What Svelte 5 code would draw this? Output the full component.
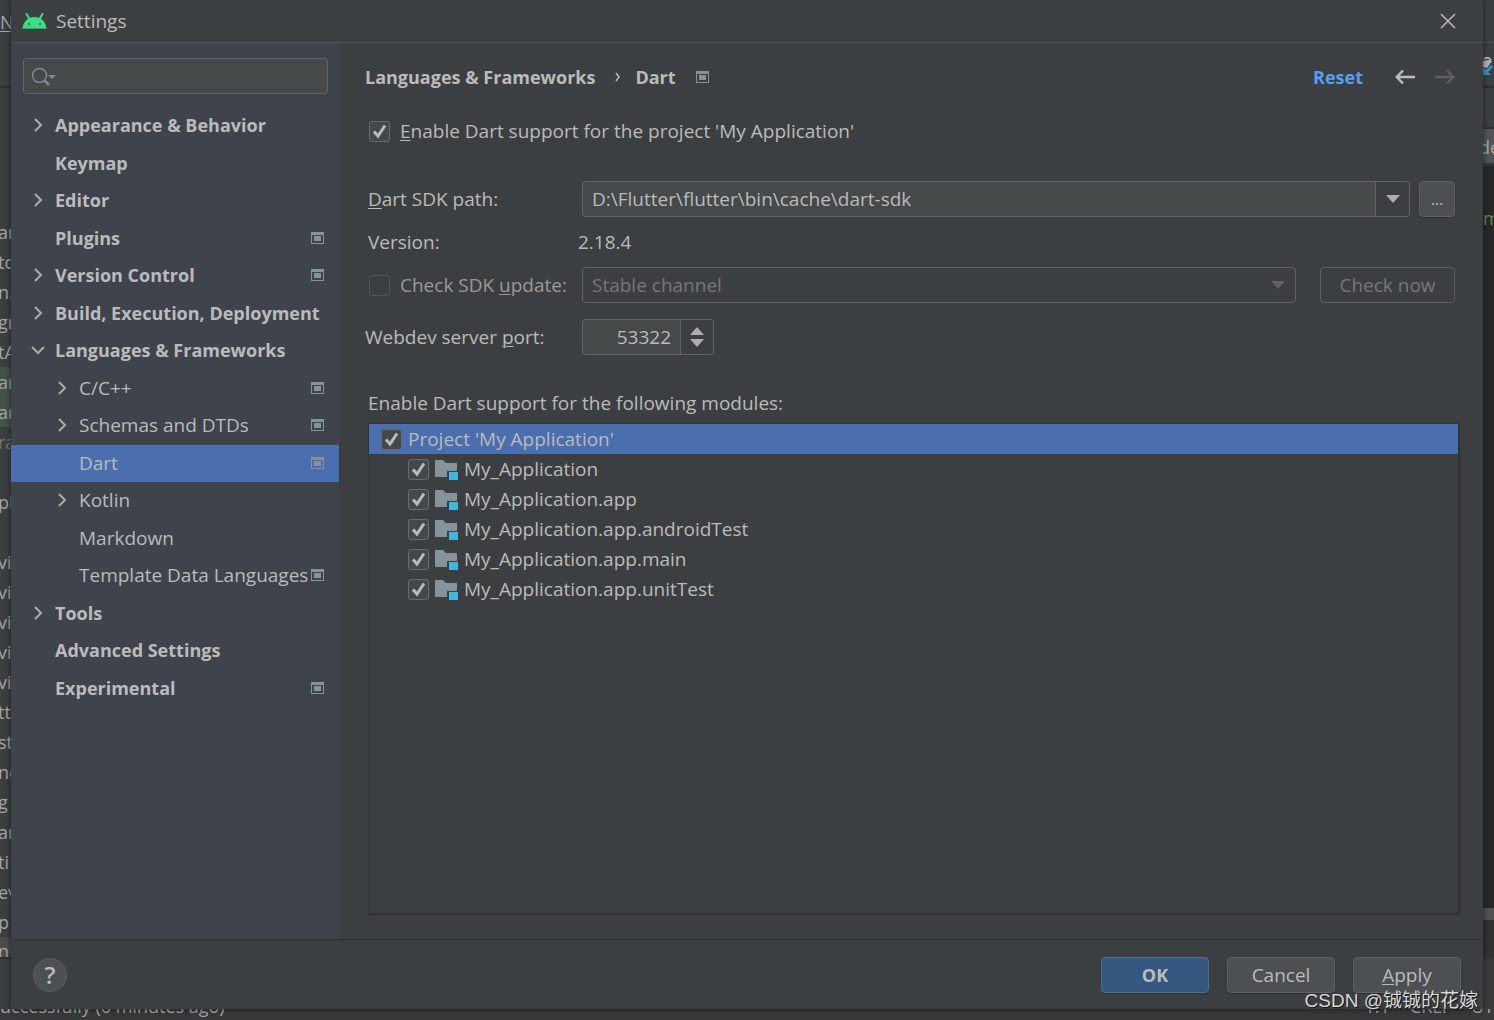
<script>
  const tree = [
    { label: 'Appearance & Behavior', level: 0, arrow: 'right' },
    { label: 'Keymap', level: 0 },
    { label: 'Editor', level: 0, arrow: 'right' },
    { label: 'Plugins', level: 0, project: true },
    { label: 'Version Control', level: 0, arrow: 'right', project: true },
    { label: 'Build, Execution, Deployment', level: 0, arrow: 'right' },
    { label: 'Languages & Frameworks', level: 0, arrow: 'down' },
    { label: 'C/C++', level: 1, arrow: 'right', project: true },
    { label: 'Schemas and DTDs', level: 1, arrow: 'right', project: true },
    { label: 'Dart', level: 1, project: true },
    { label: 'Kotlin', level: 1, arrow: 'right' },
    { label: 'Markdown', level: 1 },
    { label: 'Template Data Languages', level: 1, project: true },
    { label: 'Tools', level: 0, arrow: 'right' },
    { label: 'Advanced Settings', level: 0 },
    { label: 'Experimental', level: 0, project: true }
  ];
  let selected = $state('Dart');

  let enabled = $state(true);
  let sdkPath = $state('D:\\Flutter\\flutter\\bin\\cache\\dart-sdk');
  let port = $state('53322');
  let modules = $state([
    { name: "Project 'My Application'", root: true, checked: true },
    { name: 'My_Application', checked: true },
    { name: 'My_Application.app', checked: true },
    { name: 'My_Application.app.androidTest', checked: true },
    { name: 'My_Application.app.main', checked: true },
    { name: 'My_Application.app.unitTest', checked: true }
  ]);

  const behind = [
    'ar', 'to', 'n.', 'gr', 'tA', 'ar', 'ar', 'ra', '', 'ple', '', 'vi', 'vi',
    'vi', 'vi', 'vi', 'tt', 'st', 'ne', 'g', 'ar', 'ti', 'ev', 'p', 'n'
  ];

  function step(by) {
    port = String(Number(port) + by);
  }
</script>

{#snippet projectIcon()}
  <svg class="project" width="13" height="12" viewBox="0 0 13 12" aria-hidden="true">
    <path fill="#87939a" fill-rule="evenodd" d="M0 0h13v12H0zM1 3v8h11V3z" />
    <path fill="#87939a" d="M3 4h7v5H3z" />
  </svg>
{/snippet}

{#snippet tick()}
  <svg class="tick" width="21" height="21" viewBox="0 0 21 21" aria-hidden="true">
    <path fill="none" stroke="#bbb" stroke-width="3" d="M5 10.5l4 4.500 7-10.500" />
  </svg>
{/snippet}

<div class="screen">
  <div class="ide" aria-hidden="true">
    <div class="left">
      <div class="menu"><u>N</u></div>
      <div class="files">
        {#each behind as text, i}
          <div class="file" class:added={i === 5 || i === 6} class:dim={i === 7} class:scroll={i === 24}>{text}</div>
        {/each}
      </div>
    </div>
    <div class="right">
      <div class="r-title"></div>
      <div class="r-tools">
        <svg width="11" height="24" viewBox="0 0 11 24">
          <path fill="none" stroke="#afb1b3" stroke-width="2" d="M1 4c4-3 8 0 6 3" />
          <path fill="#afb1b3" d="M0 6l5-1 4 1-5 7-4-1z" />
          <path fill="#3592c4" d="M0 12l3 3 5-5 2 2-5 5 3 3H0z" />
        </svg>
      </div>
      <div class="r-gap"></div>
      <div class="r-tab">de</div>
      <div class="r-code"><span>m</span></div>
      <div class="r-scroll"></div>
      <div class="r-panel"></div>
      <div class="r-rest"></div>
    </div>
    <div class="status">
      <span class="message">uccessfully (6 minutes ago)</span>
      <span>1:1</span><span>CRLF</span><span>UT</span>
    </div>
  </div>

  <main class="dialog">
    <header class="title">
      <svg width="25" height="16" viewBox="0 0 25 16" aria-hidden="true">
        <path stroke="#3ddc84" stroke-width="2" stroke-linecap="round" d="M4.500 1l3 5M20.500 1l-3 5" />
        <path fill="#3ddc84" d="M.5 16C1 8.500 6 4 12.500 4s11.500 4.500 12 12z" />
        <path fill="#35a96b" d="M.5 15h24v1H.5z" />
        <circle cx="7" cy="11" r="1" fill="#25603f" /><circle cx="18" cy="11" r="1" fill="#25603f" />
      </svg>
      <h1>Settings</h1>
      <button class="icon close" aria-label="Close">
        <svg width="16" height="16" viewBox="0 0 16 16"><path stroke="#bbb" stroke-width="1.500" d="M1 1l14 14M15 1L1 15" /></svg>
      </button>
    </header>

    <div class="body">
      <nav class="sidebar" aria-label="Settings sections">
        <label class="search">
          <svg width="26" height="20" viewBox="0 0 26 20" aria-hidden="true">
            <circle cx="8.500" cy="9.500" r="7" fill="none" stroke="#7f8b91" stroke-width="1.500" />
            <path stroke="#7f8b91" stroke-width="2.500" d="M13 14l5 5" />
            <path fill="#7f8b91" d="M17 9h8l-4 4z" />
          </svg>
          <input type="text" aria-label="Search settings" />
        </label>
        <ul class="tree">
          {#each tree as item}
            <li>
              <button
                class="node"
                class:child={item.level === 1}
                class:selected={item.label === selected}
                onclick={() => (selected = item.label)}
              >
                <svg class="chevron" width="14" height="14" viewBox="0 0 14 14" aria-hidden="true">
                  {#if item.arrow}
                    <path
                      fill="none"
                      stroke="#adadad"
                      stroke-width="2"
                      d={item.arrow === 'right' ? 'M4 1l6 6-6 6' : 'M1 4l6 6 6-6'}
                    />
                  {/if}
                </svg>
                <span>{item.label}</span>
                {#if item.project}{@render projectIcon()}{/if}
              </button>
            </li>
          {/each}
        </ul>
      </nav>

      <section class="page">
        <div class="crumbs">
          <a href="#languages">Languages &amp; Frameworks</a>
          <svg width="6" height="12" viewBox="0 0 6 12" aria-hidden="true"><path fill="none" stroke="#bbb" stroke-width="1.500" d="M1 2l3 4-3 4" /></svg>
          <h2>Dart</h2>
          {@render projectIcon()}
          <a class="reset" href="#reset">Reset</a>
          <button class="icon" aria-label="Back">
            <svg width="20" height="16" viewBox="0 0 20 16"><path fill="none" stroke="#bbb" stroke-width="2.500" d="M20 8H2M8 1.500L1.800 8 8 14.500" /></svg>
          </button>
          <button class="icon" aria-label="Forward" disabled>
            <svg width="20" height="16" viewBox="0 0 20 16"><path fill="none" stroke="#5c5e60" stroke-width="2.500" d="M0 8h18M12 1.500L18.200 8 12 14.500" /></svg>
          </button>
        </div>

        <label class="check enable">
          <span class="box"><input type="checkbox" bind:checked={enabled} />{#if enabled}{@render tick()}{/if}</span>
          <span><u>E</u>nable Dart support for the project 'My Application'</span>
        </label>

        <div class="row">
          <label class="name" for="sdk"><u>D</u>art SDK path:</label>
          <div class="field grow">
            <input id="sdk" type="text" bind:value={sdkPath} />
            <button class="drop" aria-label="Show paths">
              <svg width="14" height="8" viewBox="0 0 14 8"><path fill="#adadad" d="M0 0h14L7 8z" /></svg>
            </button>
          </div>
          <button class="button browse" aria-label="Browse">...</button>
        </div>

        <div class="row version">
          <span class="name">Version:</span>
          <span>2.18.4</span>
        </div>

        <div class="row">
          <label class="name check off">
            <span class="box"><input type="checkbox" disabled /></span>
            <span>Check SDK <u>u</u>pdate:</span>
          </label>
          <div class="field grow disabled">
            <select disabled aria-label="Update channel"><option>Stable channel</option></select>
            <svg class="caret" width="14" height="8" viewBox="0 0 14 8" aria-hidden="true"><path fill="#5f6163" d="M0 0h14L7 8z" /></svg>
          </div>
          <button class="button now" disabled>Check now</button>
        </div>

        <div class="row port">
          <label class="name" for="port">Webdev server <u>p</u>ort:</label>
          <div class="field">
            <input id="port" type="text" inputmode="numeric" bind:value={port} />
            <span class="spin">
              <button aria-label="Increase" onclick={() => step(1)}>
                <svg width="14" height="8" viewBox="0 0 14 8"><path fill="#adadad" d="M0 8h14L7 0z" /></svg>
              </button>
              <button aria-label="Decrease" onclick={() => step(-1)}>
                <svg width="14" height="8" viewBox="0 0 14 8"><path fill="#adadad" d="M0 0h14L7 8z" /></svg>
              </button>
            </span>
          </div>
        </div>

        <h3>Enable Dart support for the following modules:</h3>
        <ul class="modules">
          {#each modules as mod}
            <li class:root={mod.root}>
              <label class="check">
                <span class="box"><input type="checkbox" bind:checked={mod.checked} />{#if mod.checked}{@render tick()}{/if}</span>
                {#if !mod.root}
                  <svg width="23" height="22" viewBox="0 0 23 22" aria-hidden="true">
                    <path fill="#87939a" d="M0 2h8l3 3h11v8H12v6H0z" />
                    <path fill="#40b6e0" d="M14 14h9v8h-9z" />
                  </svg>
                {/if}
                <span>{mod.name}</span>
              </label>
            </li>
          {/each}
        </ul>
      </section>
    </div>

    <footer>
      <button class="help" aria-label="Help">?</button>
      <button class="button primary">OK</button>
      <button class="button">Cancel</button>
      <button class="button"><span><u>A</u>pply</span></button>
    </footer>
  </main>

  <div class="watermark">CSDN @铖铖的花嫁</div>
</div>

<style>
  :global(body) {
    background: #3c3f41;
  }
  .screen {
    position: relative;
    height: 100vh;
    min-height: 1020px;
    box-sizing: border-box;
    padding: 0 11px 11px;
    overflow: hidden;
    font: 19px/24px 'Open Sans', 'Noto Sans', 'Noto Sans CJK SC', sans-serif;
    color: #bbb;
  }
  .screen :is(button, input, select) {
    font: inherit;
    color: inherit;
    margin: 0;
    padding: 0;
    border: 0;
    background: none;
    box-sizing: border-box;
    outline: none;
  }
  svg {
    display: block;
    flex: none;
  }
  u {
    text-decoration-thickness: 1px;
    text-underline-offset: 2px;
  }
  h1, h2, h3, ul {
    margin: 0;
    padding: 0;
    font-size: inherit;
    font-weight: 400;
    list-style: none;
  }

  /* editor window behind the dialog */
  .ide {
    position: absolute;
    inset: 0;
    display: grid;
    grid-template: 1fr 11px / 11px 1fr 11px;
    font-size: 18px;
    color: #a4a6a8;
  }
  .left, .right {
    overflow: hidden;
    white-space: nowrap;
    display: flex;
    flex-direction: column;
  }
  .right {
    grid-column: 3;
  }
  .menu {
    height: 76px;
    padding-top: 10px;
    border-bottom: 2px solid #2f3132;
  }
  .files {
    padding-top: 129px;
  }
  .file {
    height: 30px;
    line-height: 30px;
    text-indent: -2px;
  }
  .added {
    background: #455246;
  }
  .dim {
    color: #777;
  }
  .scroll {
    height: 20px;
    line-height: 28px;
    background: #4a4d4f;
    border-bottom: 2px solid #2f3132;
    overflow: hidden;
  }
  .r-title {
    height: 42px;
    border-bottom: 1px solid #4b4e50;
  }
  .r-tools {
    height: 43px;
    padding-top: 12px;
    box-sizing: border-box;
  }
  .r-gap {
    height: 39px;
    border-block: 2px solid #2f3132;
    box-sizing: content-box;
  }
  .r-tab {
    height: 34px;
    line-height: 36px;
    text-indent: -4px;
    background: #515558;
    border-bottom: 3px solid #35373a;
  }
  .r-code {
    flex: 1;
    padding-top: 40px;
    background: #282828;
    color: #6a8759;
  }
  .r-scroll {
    height: 12px;
    background: #505254;
  }
  .r-panel {
    height: 39px;
    background: #303234;
  }
  .r-rest {
    height: 50px;
    background: #3a3c3e;
  }
  .status {
    grid-column: 1 / -1;
    display: flex;
    gap: 20px;
    align-items: flex-end;
    height: 11px;
    padding-bottom: 2px;
    box-sizing: border-box;
    overflow: hidden;
    background: #37393b;
    white-space: nowrap;
  }
  .message {
    flex: 1;
  }

  /* dialog frame */
  .dialog {
    position: relative;
    display: flex;
    flex-direction: column;
    height: 100%;
    background: #3c3f41;
    box-shadow: 0 0 6px #0009;
  }
  .title {
    display: flex;
    align-items: center;
    gap: 9px;
    height: 42px;
    padding: 0 27px 0 11px;
    border-bottom: 1px solid #515456;
  }
  .screen .close {
    margin-left: auto;
  }
  .icon {
    display: block;
  }
  .body {
    flex: 1;
    display: flex;
    min-height: 0;
  }
  .sidebar {
    width: 328px;
    flex: none;
    box-sizing: border-box;
    padding-top: 15px;
    background: #3e434c;
  }
  .search {
    display: flex;
    align-items: center;
    height: 36px;
    margin: 0 11px 13px 12px;
    padding: 0 7px;
    gap: 4px;
    box-sizing: border-box;
    border: 1px solid #646464;
    border-radius: 4px;
    background: #45494a;
  }
  .search input {
    flex: 1;
    min-width: 0;
  }
  .tree {
    display: grid;
    grid-auto-rows: 1fr;
    height: 600px;
  }
  .node {
    display: flex;
    align-items: center;
    gap: 10px;
    width: 100%;
    height: 100%;
    white-space: nowrap;
  }
  .screen .node {
    padding: 0 15px 1px 20px;
    font-size: 18px;
    font-weight: 700;
  }
  .screen .node.child {
    padding-left: 44px;
    font-size: 19px;
    font-weight: 400;
  }
  .screen .node.selected {
    background: #4b6eaf;
  }
  .node .project {
    margin-left: auto;
  }
  .node.child .project {
    margin-left: auto;
  }
  .node.child {
    gap: 10px;
  }
  .node.child > span {
    margin-right: -8px;
  }

  /* Dart page */
  .page {
    flex: 1;
    min-width: 0;
    display: flex;
    flex-direction: column;
    padding: 22px 23px 24px 29px;
  }
  .crumbs {
    display: flex;
    align-items: center;
    gap: 20px;
    height: 24px;
    margin: 0 5px 0 -3px;
    font-size: 18px;
  }
  .crumbs a, .crumbs h2 {
    color: inherit;
    font-weight: 700;
    text-decoration: none;
  }
  .crumbs svg + h2 {
    margin-left: -6px;
  }
  .crumbs .reset {
    margin: 0 12px 0 auto;
    color: #589df6;
  }
  .check {
    display: flex;
    align-items: center;
    gap: 10px;
  }
  .box {
    display: grid;
    width: 21px;
    height: 21px;
    flex: none;
  }
  .box > :global(*) {
    grid-area: 1 / 1;
  }
  .screen .box input {
    appearance: none;
    width: 21px;
    height: 21px;
    border: 1px solid #6b6b6b;
    border-radius: 3px;
    background: #43494a;
  }
  .screen .box input:disabled {
    border-color: #545556;
    background: none;
  }
  .tick {
    pointer-events: none;
  }
  .enable {
    margin: 30px 0 38px 1px;
  }
  .row {
    display: flex;
    align-items: center;
    height: 36px;
    margin-right: 5px;
  }
  .name {
    width: 214px;
    flex: none;
    white-space: nowrap;
  }
  .version {
    height: 50px;
  }
  .version .name {
    width: 210px;
  }
  .off {
    box-sizing: border-box;
    padding-left: 1px;
    color: #999;
  }
  .port {
    margin: 16px 0 36px -3px;
  }
  .port .name {
    width: 217px;
  }
  .field {
    display: flex;
    height: 36px;
    box-sizing: border-box;
    border: 1px solid #646464;
    border-radius: 4px;
    background: #45494a;
    overflow: hidden;
  }
  .grow {
    flex: 1;
  }
  .screen .field input {
    flex: 1;
    min-width: 0;
    padding: 0 9px;
  }
  .drop, .spin {
    width: 34px;
    flex: none;
    display: grid;
    place-items: center;
  }
  .screen .drop, .spin {
    border-left: 1px solid #646464;
    background: #3c3f41;
  }
  .spin {
    align-content: center;
    gap: 4px;
    width: 32px;
  }
  .port .field {
    width: 132px;
  }
  .port input {
    text-align: right;
  }
  .field.disabled {
    display: grid;
    align-items: center;
    background: none;
    color: #777;
  }
  .field.disabled > * {
    grid-area: 1 / 1;
  }
  .screen .field select {
    appearance: none;
    width: 100%;
    height: 100%;
    padding: 0 9px;
    opacity: 1;
  }
  .caret {
    justify-self: end;
    margin-right: 10px;
  }
  .screen .button {
    width: 108px;
    height: 36px;
    border: 1px solid #5e6060;
    border-radius: 4px;
    background: #4c5052;
    box-shadow: 0 1px 1px #0003;
  }
  .screen .button.browse {
    width: 36px;
    margin-left: 9px;
    font-size: 16px;
  }
  .screen .button.now {
    width: 135px;
    margin-left: 24px;
    background: none;
    box-shadow: none;
    color: #777;
  }
  h3 {
    margin-bottom: 8px;
  }
  .modules {
    flex: 1;
    border: 1px solid #323232;
    border-right-width: 2px;
    border-bottom-width: 2px;
  }
  .modules .check {
    height: 30px;
    padding-left: 39px;
    gap: 6px;
  }
  .modules .root .check {
    padding-left: 12px;
    background: #4b6eaf;
  }

  footer {
    display: flex;
    align-items: center;
    gap: 18px;
    height: 69px;
    padding: 0 22px;
    border-top: 1px solid #323232;
  }
  .screen .help {
    width: 34px;
    height: 34px;
    margin-right: auto;
    border: 1px solid #5e6060;
    border-radius: 50%;
    background: #4c5052;
    font-size: 24px;
    line-height: 24px;
    font-weight: 600;
  }
  .screen .button.primary {
    border-color: #4c708c;
    background: #365880;
    font-size: 18px;
    font-weight: 700;
  }
  .watermark {
    position: absolute;
    right: 16px;
    bottom: 7px;
    font: 19px/24px 'Liberation Sans', 'Noto Sans CJK SC', sans-serif;
    color: #d8d8d8;
    text-shadow: 1px 1px 1px #000a;
  }
</style>
